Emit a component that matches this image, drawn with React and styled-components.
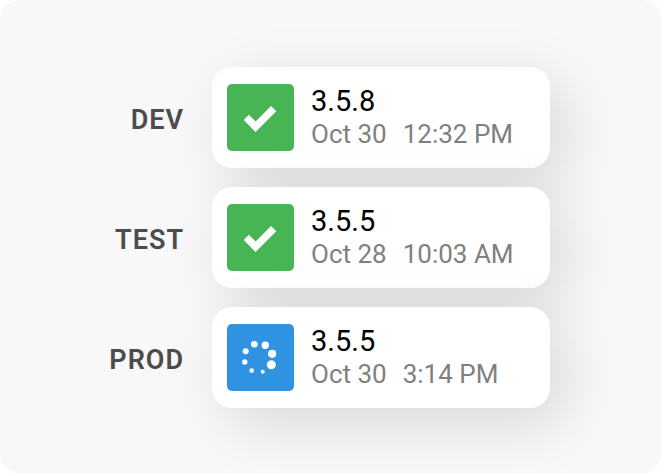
import React from "react"
import styled, { createGlobalStyle } from "styled-components"

const GlobalStyle = createGlobalStyle`
  * {
    box-sizing: border-box;
  }

  body {
    margin: 0;
    background-color: #fff;
    font-family: Roboto, "Liberation Sans", sans-serif;
  }
`

const Panel = styled.main`
  display: flex;
  align-items: center;
  min-height: 100vh;
  padding: 66px 112px 64px 0;
  background-color: #f8f8f8;
  border-radius: 20px;
`

const List = styled.ul`
  display: grid;
  grid-template-columns: 1fr;
  row-gap: 19px;
  width: 100%;
  margin: 0;
  padding: 0;
  list-style: none;
`

const Row = styled.li`
  display: grid;
  grid-template-columns: 1fr 338px;
  column-gap: 28px;
  align-items: center;
`

const Stage = styled.span`
  padding-top: 4px;
  color: #4c4c4c;
  font-size: 27px;
  line-height: 32px;
  font-weight: 600;
  letter-spacing: 1px;
  text-align: right;
`

const Card = styled.article`
  display: flex;
  align-items: center;
  column-gap: 17px;
  height: 101px;
  padding: 0 15px;
  background-color: #fff;
  border-radius: 20px;
  box-shadow: 15px 16px 60px rgba(0, 0, 0, 0.13);
`

const Status = styled.div`
  display: flex;
  flex: none;
  width: 67px;
  height: 67px;
  background-color: ${({ $running }) => ($running ? "#3093e1" : "#48b554")};
  border-radius: 5px;

  svg {
    width: 100%;
    height: 100%;
  }
`

const Details = styled.div`
  padding-bottom: 2px;
`

const Version = styled.div`
  color: #000;
  font-size: 29px;
  line-height: 34px;
`

const Date = styled.div`
  display: flex;
  column-gap: 16px;
  color: #808080;
  font-size: 26px;
  line-height: 32px;
  white-space: nowrap;
`

const CheckIcon = () => (
  <svg viewBox="0 0 67 67" role="img" aria-label="Deployed" fill="#fff">
    <path d="M16.7 36 L21.9 30.8 L28.6 37.4 L44 22 L49.3 27.3 L28.6 48 Z" />
  </svg>
)

const SpinnerIcon = () => (
  <svg viewBox="0 0 67 67" role="img" aria-label="Deploying" fill="#fff">
    <circle cx="27.3" cy="20.3" r="3.3" />
    <circle cx="38.3" cy="21.3" r="3.7" />
    <circle cx="45.2" cy="29.8" r="4.1" />
    <circle cx="44.3" cy="40.7" r="4.5" />
    <circle cx="35.7" cy="47.7" r="2" />
    <circle cx="24.7" cy="46.6" r="2.3" />
    <circle cx="17.8" cy="38" r="2.7" />
    <circle cx="18.7" cy="27.2" r="3" />
  </svg>
)

const deployments = [
  { stage: "DEV", version: "3.5.8", day: "Oct 30", time: "12:32 PM" },
  { stage: "TEST", version: "3.5.5", day: "Oct 28", time: "10:03 AM" },
  { stage: "PROD", version: "3.5.5", day: "Oct 30", time: "3:14 PM", running: true },
]

const App = () => (
  <>
    <GlobalStyle />
    <Panel>
      <List>
        {deployments.map(({ stage, version, day, time, running }) => (
          <Row key={stage}>
            <Stage>{stage}</Stage>
            <Card>
              <Status $running={running}>
                {running ? <SpinnerIcon /> : <CheckIcon />}
              </Status>
              <Details>
                <Version>{version}</Version>
                <Date>
                  <span>{day}</span>
                  <span>{time}</span>
                </Date>
              </Details>
            </Card>
          </Row>
        ))}
      </List>
    </Panel>
  </>
)

export default App
